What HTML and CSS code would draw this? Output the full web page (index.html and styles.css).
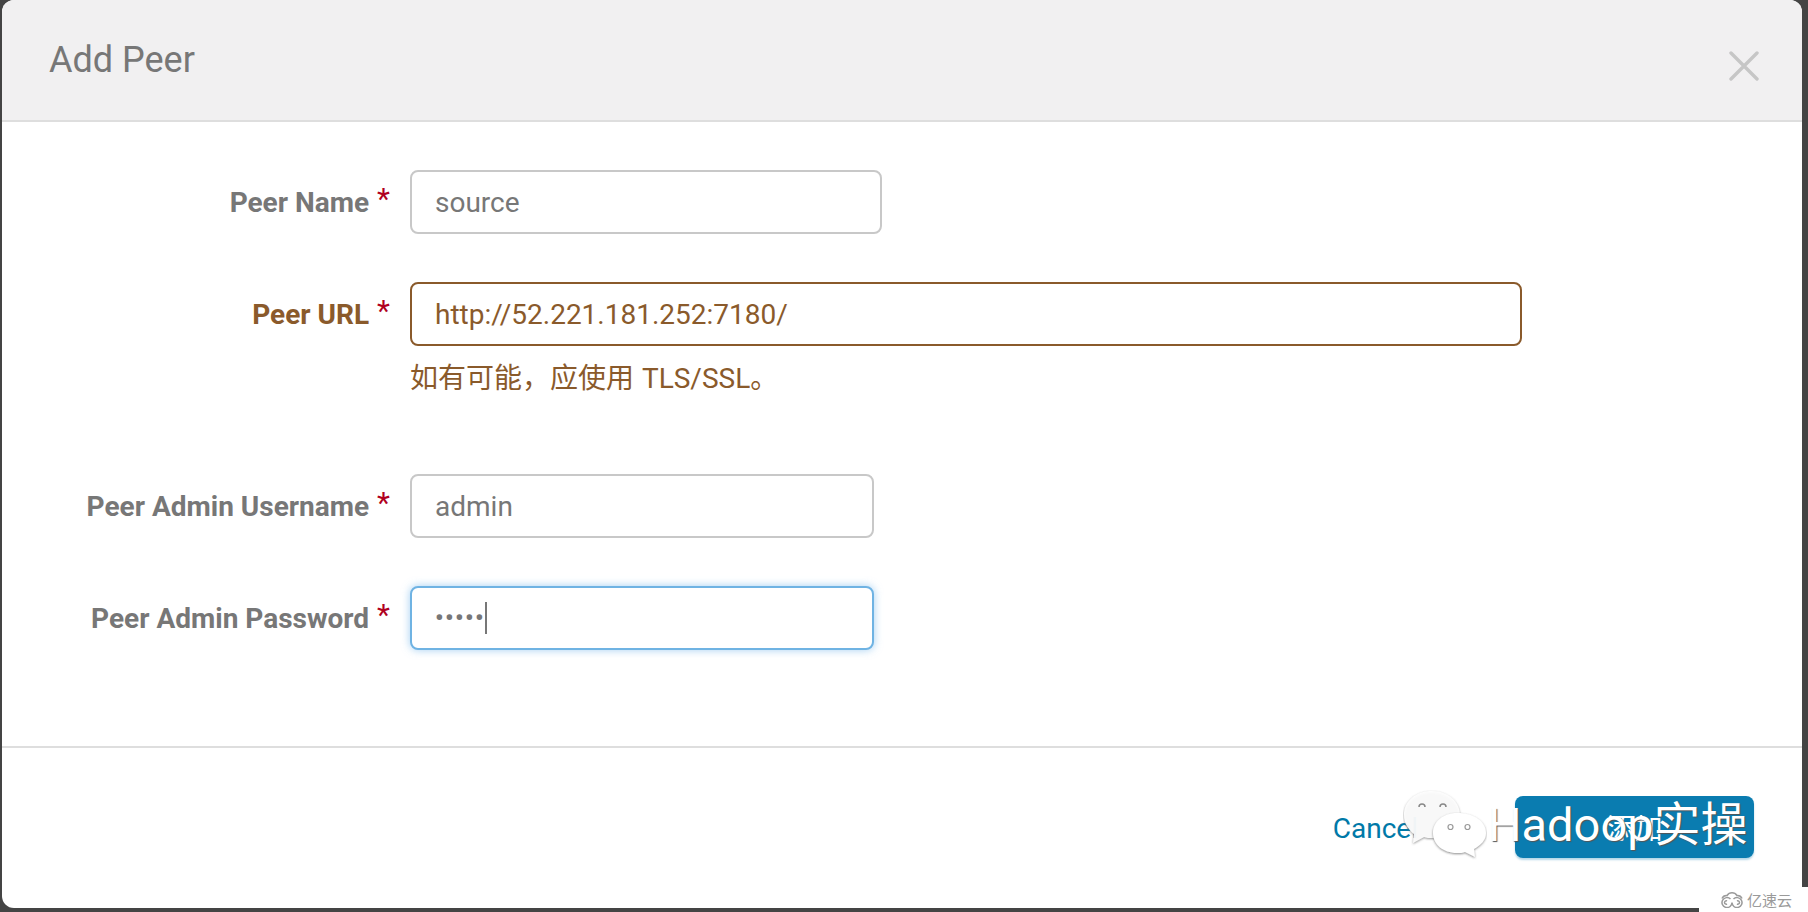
FILE: index.html
```html
<!DOCTYPE html>
<html>
<head>
<meta charset="utf-8">
<title>Add Peer</title>
<link rel="stylesheet" href="styles.css">
</head>
<body>

<div class="modal">
  <div class="modal-header">
    <h3>Add Peer</h3>
    <span class="close"><svg width="30" height="30" viewBox="0 0 30 30"><path d="M2 2L28 28M28 2L2 28" stroke="#c6c6c6" stroke-width="3.4" stroke-linecap="round"/></svg></span>
  </div>

  <div class="modal-body">
    <div class="row">
      <label>Peer Name<i>*</i></label>
      <div class="field"><input class="wide" type="text" value="source"></div>
    </div>
    <div class="row warn">
      <label>Peer URL<i>*</i></label>
      <div class="field">
        <input class="full" type="text" value="http://52.221.181.252:7180/">
        <p class="help">如有可能，应使用 TLS/SSL。</p>
      </div>
    </div>
    <div class="row">
      <label>Peer Admin Username<i>*</i></label>
      <div class="field"><input type="text" value="admin"></div>
    </div>
    <div class="row">
      <label>Peer Admin Password<i>*</i></label>
      <div class="field"><div class="input focus"><span class="dots">•••••</span><span class="caret"></span></div></div>
    </div>
  </div>

  <div class="modal-footer">
    <a href="#">Cancel</a>
    <button>添加</button>
  </div>
</div>

<!-- watermark over the footer -->
<div class="wm">
  <svg class="bubbles" width="84" height="72" viewBox="0 0 84 72">
    <defs><filter id="sh" x="-20%" y="-20%" width="140%" height="140%"><feDropShadow dx="0" dy="1" stdDeviation=".8" flood-color="#666" flood-opacity=".75"/></filter></defs>
    <path filter="url(#sh)" fill-opacity=".9" d="M29 1C13 1 1 11 1 25c0 9 5 15 10 19l-1 9 11-6c3 1 5 1 8 1 16 0 28-10 28-23S45 1 29 1z" fill="#fff"/>
    <path d="M16 17a3 3 0 0 1 6 0M37 17a3 3 0 0 1 6 0" fill="none" stroke="#888" stroke-width="1.500"/>
    <path filter="url(#sh)" d="M54 23C40 23 30 32 30 43s10 20 24 20c3 0 6 0 8-1l10 5-1-8c7-4 12-9 12-16 0-11-11-20-29-20z" fill="#fff"/>
    <path d="M45 37a2.500 2.500 0 0 1 5 0a2.500 2.500 0 0 1-5 0M62 37a2.500 2.500 0 0 1 5 0a2.500 2.500 0 0 1-5 0" fill="none" stroke="#999" stroke-width="1.200"/>
  </svg>
  <span class="wm-text">Hadoop实操</span>
</div>

<div class="brand">
  <svg width="28" height="16" viewBox="0 0 28 16"><path d="M4 6.500a5 5 0 0 1 5-3 6 6 0 0 1 10 0 5 5 0 0 1 5 3" fill="none" stroke="#9a9a9a" stroke-width="1.500"/><path d="M14 10.500a5 5 0 1 1-1.500-3.500M14 10.500a5 5 0 1 0 1.500-3.500M9 12a1.700 1.700 0 1 1 0-3M19 12a1.700 1.700 0 1 0 0-3" fill="none" stroke="#9a9a9a" stroke-width="1.500"/></svg>
  <span>亿速云</span>
</div>

</body>
</html>
```
FILE: styles.css
```css
html, body { margin: 0; padding: 0; height: 912px; overflow: hidden; }
body { background: #444; font-family: Roboto, "Noto Sans CJK SC", sans-serif; color: #777; position: relative; }

.modal { margin-left: 2px; width: 1800px; height: 908px; background: #fff; border-radius: 12px; overflow: hidden; }

.modal-header { height: 120px; background: #f1f0f1; border-bottom: 2px solid #dedede; display: flex; justify-content: space-between; align-items: center; padding: 0 43px 0 47px; }
.modal-header h3 { font-size: 36px; font-weight: 400; margin: 0; color: #777; }
.close { display: block; height: 30px; margin-top: 12px; }

.modal-body { height: 626px; padding-top: 48px; box-sizing: border-box; border-bottom: 2px solid #dedede; }

.row { display: flex; margin-bottom: 48px; }
.row label { width: 388px; flex: none; text-align: right; font-size: 28px; font-weight: 700; line-height: 65px; height: 64px; color: #777; white-space: nowrap; }
.row label i { font-style: normal; font-weight: 400; font-size: 30px; color: #b00020; margin-left: 8px; line-height: 1; position: relative; top: -3px; }
.field { margin-left: 20px; }

input, .input { box-sizing: border-box; width: 464px; height: 64px; padding: 0 23px; border: 2px solid #c8c8c8; border-radius: 8px; font: 28px Roboto, sans-serif; color: #777; background: #fff; outline: none; display: block; }
input.wide { width: 472px; }
input.full { width: 1112px; }

.input.focus { border-color: #6fb3e3; box-shadow: 0 0 8px rgba(102, 175, 233, .6); display: flex; align-items: center; }
.dots { font-size: 24px; font-weight: 700; letter-spacing: 1.400px; }
.caret { width: 2px; height: 32px; background: #777; }

.warn label { color: #8a5a2b; }
.warn input { border-color: #8a5a2b; color: #8a5a2b; }
.help { margin: 15px 0 29px 0; font-size: 28px; line-height: 36px; color: #8a5a2b; word-spacing: 1px; }

.modal-footer { display: flex; justify-content: flex-end; align-items: center; height: 160px; padding-right: 48px; }
.modal-footer a { color: #0079a8; font-size: 28px; text-decoration: none; margin-right: 97px; }
.modal-footer button { width: 239px; height: 62px; margin-top: -2px; background: #0a7cb0; border: 0; border-radius: 8px; color: #fff; font: 28px "Noto Sans CJK SC", sans-serif; box-shadow: 0 2px 2px rgba(10, 124, 176, .3); }

/* watermark sits on top of the buttons */
.wm { position: absolute; left: 1403px; top: 790px; width: 360px; height: 72px; }
.bubbles { position: absolute; left: 0; top: 0; }
.wm-text { position: absolute; left: 85px; top: 0; font-size: 47px; line-height: 70px; color: #fff; white-space: nowrap; text-shadow: 1px 1px 1px #555; font-family: Roboto, "Noto Sans CJK SC", sans-serif; }

.brand { position: absolute; right: 0; bottom: 0; width: 90px; height: 25px; padding-left: 19px; background: #fff; display: flex; align-items: center; gap: 1px; color: #9a9a9a; font-size: 15px; font-family: "Noto Sans CJK SC", sans-serif; }
```
